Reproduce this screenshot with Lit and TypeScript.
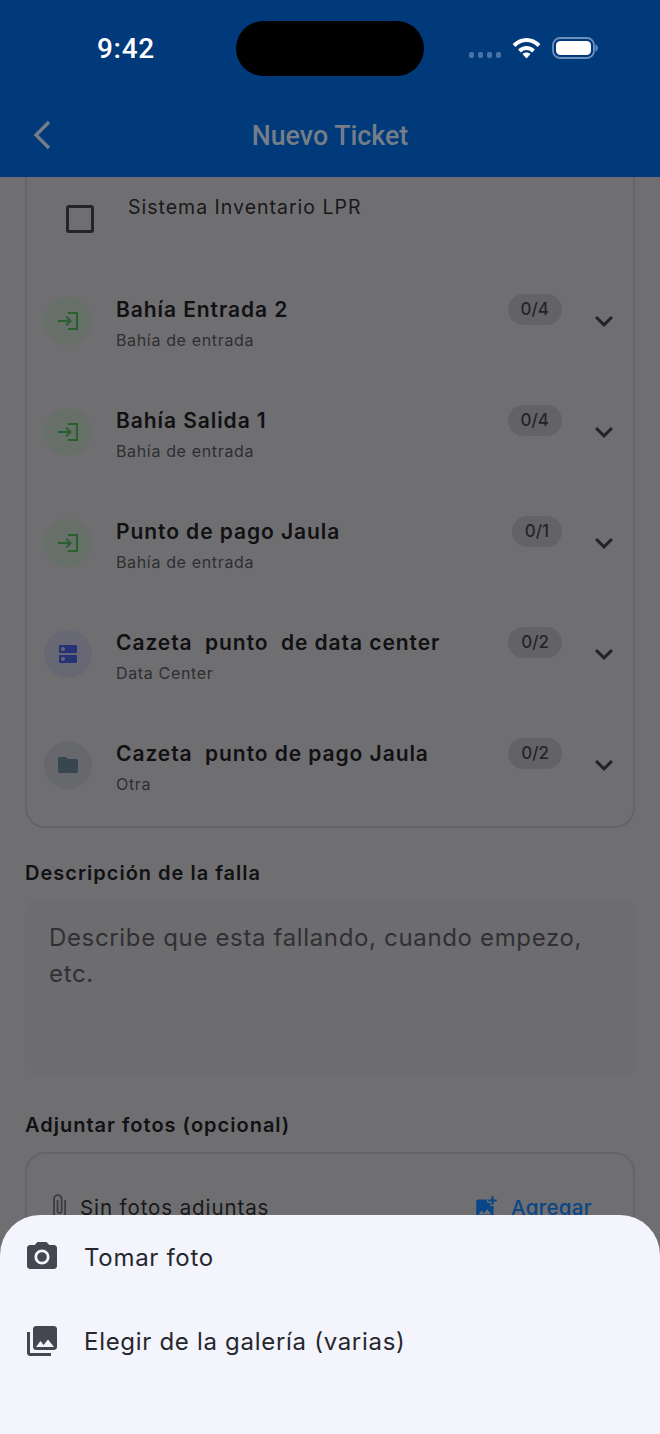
import { LitElement, html, css, svg } from "lit";
import { customElement } from "lit/decorators.js";

const P = {
  login: "M11 7L9.6 8.4l2.6 2.6H2v2h10.2l-2.6 2.6L11 17l5-5-5-5zm9 12h-8v2h8V19zm0 0V5h-8V3h10v18h-2z",
  dns: "M20 13H4c-.55 0-1 .45-1 1v6c0 .55.45 1 1 1h16c.55 0 1-.45 1-1v-6c0-.55-.45-1-1-1zM7 19c-1.1 0-2-.9-2-2s.9-2 2-2 2 .9 2 2-.9 2-2 2zM20 3H4c-.55 0-1 .45-1 1v6c0 .55.45 1 1 1h16c.55 0 1-.45 1-1V4c0-.55-.45-1-1-1zM7 9c-1.1 0-2-.9-2-2s.9-2 2-2 2 .9 2 2-.9 2-2 2z",
  folder: "M10 4H4c-1.1 0-1.99.9-1.99 2L2 18c0 1.1.9 2 2 2h16c1.1 0 2-.9 2-2V8c0-1.1-.9-2-2-2h-8l-2-2z",
  camera: "M12 15.2a3.2 3.2 0 1 0 0-6.4 3.2 3.2 0 0 0 0 6.4z M9 2L7.17 4H4c-1.1 0-2 .9-2 2v12c0 1.1.9 2 2 2h16c1.1 0 2-.9 2-2V6c0-1.1-.9-2-2-2h-3.17L15 2H9zm3 15c-2.76 0-5-2.24-5-5s2.24-5 5-5 5 2.24 5 5-2.24 5-5 5z",
  library: "M22 16V4c0-1.1-.9-2-2-2H8c-1.1 0-2 .9-2 2v12c0 1.1.9 2 2 2h12c1.1 0 2-.9 2-2zm-11-4l2.03 2.71L16 11l4 5H8l3-4zM2 6v14c0 1.1.9 2 2 2h14v-2H4V6H2z",
  add: "M19 7v2.99s-1.99.01-2 0V7h-3s.01-1.99 0-2h3V2h2v3h3v2h-3zm-3 4V8h-3V5H5c-1.1 0-2 .9-2 2v12c0 1.1.9 2 2 2h12c1.1 0 2-.9 2-2v-8h-3zM5 19l3-4 2 3 3-4 4 5H5z",
  clip: "M16.5 6v11.5c0 2.21-1.79 4-4 4s-4-1.79-4-4V5c0-1.38 1.12-2.5 2.5-2.5s2.5 1.12 2.5 2.5v10.5c0 .55-.45 1-1 1s-1-.45-1-1V6H10v9.5c0 1.38 1.12 2.5 2.5 2.5s2.5-1.12 2.5-2.5V5c0-2.21-1.79-4-4-4S7 2.79 7 5v12.5c0 3.04 2.46 5.5 5.5 5.5s5.5-2.46 5.5-5.5V6h-1.5z",
  chevron: "M16.59 8.59L12 13.17 7.41 8.59 6 10l6 6 6-6z",
};

const icon = (d: string, size: number, color: string) => html`<svg
  width=${size} height=${size} viewBox="0 0 24 24" fill=${color} aria-hidden="true">${svg`<path d=${d} fill-rule="evenodd"></path>`}</svg>`;

const ROWS = [
  { t: "Bahía Entrada 2", s: "Bahía de entrada", c: "0/4", k: "in" },
  { t: "Bahía Salida 1", s: "Bahía de entrada", c: "0/4", k: "in" },
  { t: "Punto de pago Jaula", s: "Bahía de entrada", c: "0/1", k: "in" },
  { t: "Cazeta\u00a0 punto\u00a0 de data center", s: "Data Center", c: "0/2", k: "dc" },
  { t: "Cazeta\u00a0 punto de pago Jaula", s: "Otra", c: "0/2", k: "other" },
];

const KIND: Record<string, { d: string; color: string; bg: string }> = {
  in: { d: P.login, color: "#28602f", bg: "#667068" },
  dc: { d: P.dns, color: "#253275", bg: "#676874" },
  other: { d: P.folder, color: "#38464f", bg: "#66686c" },
};

@customElement("app-root")
export class AppRoot extends LitElement {
  static styles = css`
    :host { display: block; width: 660px; height: 1434px; font-family: Inter, "Noto Sans", sans-serif; }
    .screen { position: relative; width: 660px; height: 1434px; overflow: hidden; background: #6f6f71; display: flex; flex-direction: column; }
    .top { height: 177px; flex: none; background: #003a7a; display: flex; flex-direction: column; }
    .status { height: 97px; display: grid; grid-template-columns: 236px 188px 236px; }
    .time { padding: 32px 0 0 97px; color: #fff; font: 500 28px/33px Roboto, sans-serif; letter-spacing: .7px; }
    .island { margin-top: 21px; height: 55px; border-radius: 28px; background: #000; }
    .indicators { padding: 37px 0 0 45px; display: flex; align-items: flex-start; }
    .dots { display: flex; gap: 4px; margin: 15px 11px 0 0; }
    .dots i { width: 5px; height: 6px; border-radius: 2px; background: #4c72a3; }
    .wifi { margin-right: 11px; }
    .bar { position: relative; height: 80px; display: flex; align-items: flex-start; justify-content: center; }
    .back { position: absolute; left: 33px; top: 23px; }
    .title { margin-top: 22px; color: #757d88; font: 500 26.8px/34px Roboto, sans-serif; }
    .body { flex: 1; min-height: 0; overflow: hidden; padding: 0 25px; display: flex; flex-direction: column; }
    .card { border: 2px solid #646467; border-top: none; border-radius: 0 0 20px 20px; height: 651px; flex: none; box-sizing: border-box; }
    .sys { display: flex; padding: 17px 0 0 39px; height: 102px; box-sizing: border-box; }
    .check { width: 22px; height: 22px; border: 3px solid #252528; border-radius: 3px; margin-top: 11px; flex: none; }
    .sys span { margin: 1px 0 0 34px; color: #18181b; font-size: 19.5px; line-height: 24px; letter-spacing: 1px; }
    .row { height: 111px; display: flex; align-items: flex-start; padding: 0 11px 0 17px; box-sizing: border-box; }
    .avatar { width: 48px; height: 48px; border-radius: 50%; flex: none; display: flex; align-items: center; justify-content: center; margin-top: 18px; }
    .text { flex: 1; margin: 18px 0 0 24px; min-width: 0; }
    .name { color: #111113; font-size: 21px; line-height: 26px; font-weight: 600; letter-spacing: .93px; white-space: nowrap; }
    .sub { color: #2e2e32; font-size: 16px; line-height: 22px; letter-spacing: .65px; margin-top: 6px; }
    .pill { flex: none; height: 31px; padding: 0 13px; border-radius: 16px; background: #636367; color: #242427; font-size: 17px; line-height: 31px; font-weight: 500; margin: 15px 24px 0 0; }
    .chev { flex: none; margin-top: 24px; height: 36px; }
    .label { margin-top: 31px; color: #111113; font-size: 20px; line-height: 28px; font-weight: 600; letter-spacing: 1px; }
    .area { margin-top: 13px; height: 178px; flex: none; box-sizing: border-box; border-radius: 14px; background: #6d6d6f; padding: 20px 24px 0; color: #303034; font-size: 24px; line-height: 36px; letter-spacing: .65px; }
    .label.second { margin-top: 33px; }
    .attach { margin-top: 13px; height: 120px; flex: none; border: 2px solid #646467; border-radius: 20px; box-sizing: border-box; display: flex; align-items: flex-start; padding: 40px 41px 0 18px; }
    .attach .none { margin-left: 7px; flex: 1; color: #18181b; font-size: 20.5px; line-height: 28px; letter-spacing: .9px; }
    .attach .agr { color: #0a4588; font-size: 20.5px; line-height: 28px; font-weight: 500; letter-spacing: .3px; margin-left: 12px; }
    .attach .clip { margin-top: -1px; }
    .sheet { position: absolute; left: 0; right: 0; bottom: 0; height: 219px; background: #f3f4fc; border-radius: 40px 40px 0 0; }
    .opt { height: 84px; display: flex; align-items: center; padding-left: 24px; color: #26272c; font-size: 24px; letter-spacing: .7px; }
    .opt span { margin-left: 24px; }
  `;

  render() {
    return html`<div class="screen">
      <div class="top">
        <div class="status">
          <div class="time">9:42</div>
          <div class="island"></div>
          <div class="indicators">
            <div class="dots"><i></i><i></i><i></i><i></i></div>
            <svg class="wifi" width="29" height="22" viewBox="0 0 29 22" fill="none" stroke="#fff" stroke-width="4" aria-hidden="true">
              <path d="M2 8.500C9.500 1 19.500 1 27 8.500"></path>
              <path d="M7.500 14C11.500 10 17.500 10 21.500 14"></path>
              <path d="M14.500 21.500l-4-4.500c2.200-2 5.800-2 8 0z" fill="#fff" stroke="none"></path>
            </svg>
            <svg width="46" height="22" viewBox="0 0 46 22" aria-hidden="true">
              <rect x="1" y="1" width="41" height="20" rx="7" fill="none" stroke="#6d8fbb" stroke-width="1.800"></rect>
              <rect x="4" y="4" width="35" height="14" rx="4.500" fill="#fff"></rect>
              <path d="M43.500 7.500c1.400.4 2.300 1.800 2.300 3.500s-.9 3.100-2.300 3.500z" fill="#6d8fbb"></path>
            </svg>
          </div>
        </div>
        <div class="bar">
          <svg class="back" width="18" height="30" viewBox="0 0 18 30" fill="none" stroke="#757d88" stroke-width="3.400" aria-hidden="true"><path d="M16 2L3 15L16 28"></path></svg>
          <div class="title">Nuevo Ticket</div>
        </div>
      </div>
      <div class="body">
        <div class="card">
          <div class="sys"><div class="check"></div><span>Sistema Inventario LPR</span></div>
          ${ROWS.map((r) => {
            const k = KIND[r.k];
            return html`<div class="row">
              <div class="avatar" style="background:${k.bg}">${icon(k.d, 24, k.color)}</div>
              <div class="text"><div class="name">${r.t}</div><div class="sub">${r.s}</div></div>
              <div class="pill">${r.c}</div>
              <div class="chev">${icon(P.chevron, 36, "#232326")}</div>
            </div>`;
          })}
        </div>
        <div class="label">Descripción de la falla</div>
        <div class="area">Describe que esta fallando, cuando empezo, etc.</div>
        <div class="label second">Adjuntar fotos (opcional)</div>
        <div class="attach">
          <div class="clip">${icon(P.clip, 28, "#3c3c40")}</div>
          <div class="none">Sin fotos adjuntas</div>
          <div class="addi">${icon(P.add, 26, "#0a4588")}</div>
          <div class="agr">Agregar</div>
        </div>
      </div>
      <div class="sheet">
        <div class="opt">${icon(P.camera, 36, "#45464f")}<span>Tomar foto</span></div>
        <div class="opt">${icon(P.library, 36, "#45464f")}<span>Elegir de la galería (varias)</span></div>
      </div>
    </div>`;
  }
}
